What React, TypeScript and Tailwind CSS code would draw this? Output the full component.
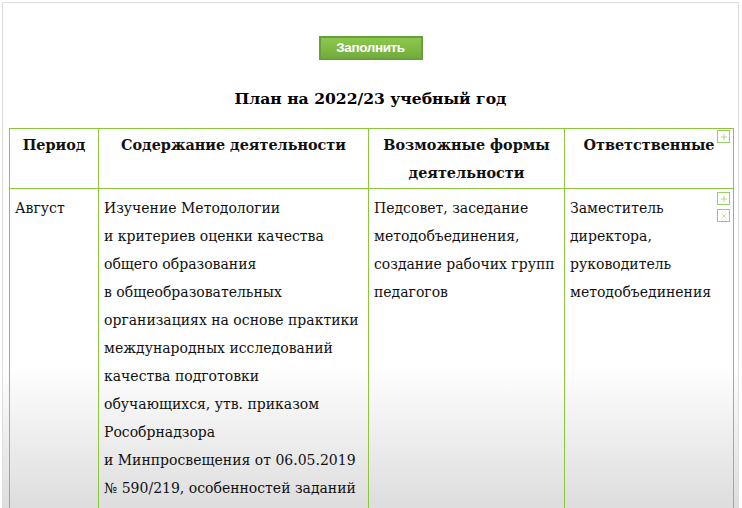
import { Plus, X } from 'lucide-react'

const serif = 'font-["DejaVu_Serif",Georgia,serif]'

function CellButton({ kind, className }: { kind: 'plus' | 'x'; className: string }) {
  return (
    <span
      className={`absolute flex h-[13px] w-[13px] items-center justify-center border border-[#9ccc65] bg-white text-[#8bc34a] ${className}`}
    >
      {kind === 'plus' ? <Plus size={10} strokeWidth={1.5} /> : <X size={8} strokeWidth={1.5} />}
    </span>
  )
}

const content = [
  'Изучение Методологии',
  'и критериев оценки качества',
  'общего образования',
  'в общеобразовательных',
  'организациях на основе практики',
  'международных исследований',
  'качества подготовки',
  'обучающихся, утв. приказом',
  'Рособрнадзора',
  'и Минпросвещения от 06.05.2019',
  '№ 590/219, особенностей заданий',
]

const forms = ['Педсовет, заседание', 'методобъединения,', 'создание рабочих групп', 'педагогов']
const people = ['Заместитель', 'директора,', 'руководитель', 'методобъединения']

export default function App() {
  return (
    <div className="h-[508px] w-[742px] overflow-hidden bg-white pt-[2px]">
      <div className="ml-[2px] h-[560px] w-[737px] border-l border-r border-t border-[#dedede] bg-[linear-gradient(to_bottom,#ffffff_0px,#ffffff_360px,#dcdcdc_510px)]">
        <div className="flex justify-center pt-[33px]">
          <button className="h-[24px] w-[104px] border-2 border-[#67a03a] bg-[linear-gradient(to_bottom,#8cc84b,#72ad3c)] font-['Liberation_Sans',Arial,sans-serif] text-[13.5px] font-bold tracking-[-0.4px] text-white">
            Заполнить
          </button>
        </div>
        <h2 className={`${serif} mt-[25px] text-center text-[15.6px] leading-[28px] font-bold text-black`}>
          План на 2022/23 учебный год
        </h2>
        <table
          className={`${serif} mt-[15px] ml-[6px] w-[724px] table-fixed border-collapse text-[14px] leading-[28px] text-[#111]`}
        >
          <colgroup>
            <col className="w-[89px]" />
            <col className="w-[270px]" />
            <col className="w-[196px]" />
            <col className="w-[169px]" />
          </colgroup>
          <thead>
            <tr className="h-[60px] text-[14.4px]">
              <th className="border border-[#8cc63f] px-[6px] pt-[2px] align-top font-bold">Период</th>
              <th className="border border-[#8cc63f] px-[6px] pt-[2px] align-top font-bold">Содержание деятельности</th>
              <th className="border border-[#8cc63f] px-[6px] pt-[2px] align-top font-bold">
                Возможные формы
                <br />
                деятельности
              </th>
              <th className="relative border border-[#8cc63f] px-[6px] pt-[2px] align-top font-bold">
                Ответственные
                <CellButton kind="plus" className="top-[1px] right-[3px]" />
              </th>
            </tr>
          </thead>
          <tbody>
            <tr>
              <td className="border border-[#8cc63f] px-[5px] pt-[5px] pb-[40px] align-top">Август</td>
              <td className="border border-[#8cc63f] px-[5px] pt-[5px] pb-[40px] align-top whitespace-nowrap">
                {content.map((line) => (
                  <div key={line}>{line}</div>
                ))}
              </td>
              <td className="border border-[#8cc63f] px-[5px] pt-[5px] pb-[40px] align-top whitespace-nowrap">
                {forms.map((line) => (
                  <div key={line}>{line}</div>
                ))}
              </td>
              <td className="relative border border-[#8cc63f] px-[5px] pt-[5px] pb-[40px] align-top whitespace-nowrap">
                {people.map((line) => (
                  <div key={line}>{line}</div>
                ))}
                <CellButton kind="plus" className="top-[3px] right-[3px]" />
                <CellButton kind="x" className="top-[20px] right-[3px]" />
              </td>
            </tr>
          </tbody>
        </table>
      </div>
    </div>
  )
}
